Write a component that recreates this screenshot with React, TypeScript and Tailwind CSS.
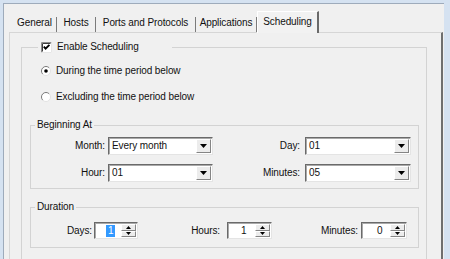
import React from "react";

function CheckBox() {
  return (
    <svg width="11" height="11" viewBox="0 0 11 11" className="shrink-0">
      <rect x="0" y="0" width="11" height="11" fill="#fff" />
      <path d="M0.5 10.5 V0.5 H10.5" fill="none" stroke="#8c8c8c" />
      <path d="M1.5 9.5 V1.5 H9.5" fill="none" stroke="#3c3c3c" />
      <path d="M0.5 10.5 H10.5 V0.5" fill="none" stroke="#e6e6e6" />
      <path d="M2.8 4.6 L4.6 6.6 L8.4 2.8" fill="none" stroke="#000" strokeWidth="1.9" />
    </svg>
  );
}

function Radio({ checked }: { checked?: boolean }) {
  return (
    <svg width="10" height="10" viewBox="0 0 10 10" className="shrink-0">
      <circle cx="5" cy="5" r="4.5" fill="#fff" />
      <path d="M1.8 8.2 A4.5 4.5 0 0 1 8.2 1.8" fill="none" stroke="#7a7a7a" />
      <path d="M8.2 1.8 A4.5 4.5 0 0 1 1.8 8.2" fill="none" stroke="#e2e2e2" />
      {checked && <circle cx="5" cy="5" r="1.8" fill="#000" />}
    </svg>
  );
}

function Combo({ value, className }: { value: string; className: string }) {
  return (
    <div
      className={`flex h-[18px] bg-white border border-t-[#6a6a6a] border-l-[#6a6a6a] border-r-[#e4e4e4] border-b-[#e4e4e4] shadow-[inset_1px_1px_0_#a9a9a9] ${className}`}
    >
      <div className="flex flex-1 items-center pl-[3px]">{value}</div>
      <div className="my-[1px] mr-[1px] flex w-[15px] items-center justify-center bg-[#ececec] border border-t-white border-l-white border-r-[#858585] border-b-[#858585]">
        <svg width="7" height="4" viewBox="0 0 7 4">
          <polygon points="0,0 7,0 3.5,4" fill="#000" />
        </svg>
      </div>
    </div>
  );
}

function Spin({
  value,
  selected,
  className,
  pad,
}: {
  value: string;
  selected?: boolean;
  className: string;
  pad: string;
}) {
  return (
    <div
      className={`flex h-[17px] bg-white border border-t-[#6a6a6a] border-l-[#6a6a6a] border-r-[#e4e4e4] border-b-[#e4e4e4] shadow-[inset_1px_1px_0_#a9a9a9] ${className}`}
    >
      <div className={`flex flex-1 items-center ${pad}`}>
        {selected ? (
          <span className="bg-[#3399ff] px-[2px] text-white">{value}</span>
        ) : (
          value
        )}
      </div>
      <div className="my-[1px] mr-[1px] flex w-[15px] flex-col">
        <div className="flex flex-1 items-center justify-center bg-[#ececec] border border-t-white border-l-white border-r-[#858585] border-b-[#858585]">
          <svg width="5" height="3" viewBox="0 0 5 3">
            <polygon points="2.5,0 5,3 0,3" fill="#000" />
          </svg>
        </div>
        <div className="flex flex-1 items-center justify-center bg-[#ececec] border border-t-white border-l-white border-r-[#858585] border-b-[#858585]">
          <svg width="5" height="3" viewBox="0 0 5 3">
            <polygon points="0,0 5,0 2.5,3" fill="#000" />
          </svg>
        </div>
      </div>
    </div>
  );
}

const tabs = [
  { name: "General", w: "w-[44px]" },
  { name: "Hosts", w: "w-[39px]" },
  { name: "Ports and Protocols", w: "w-[100px]" },
  { name: "Applications", w: "w-[61px]" },
];

export default function App() {
  return (
    <div className="h-[259px] w-[450px] overflow-hidden bg-[#d5e2f1] pl-[3px] pt-[3px] font-['Liberation_Sans',Arial,sans-serif] text-[10px] leading-[12px] tracking-[-0.1px] text-[#111]">
      <div className="flex h-[256px] w-[441px] flex-col border-l border-t border-[#9eabbb] bg-[#f0f0f0]">
        {/* tab strip */}
        <div className="flex h-[28px] shrink-0 items-end pl-[9px]">
          {tabs.map((t) => (
            <div
              key={t.name}
              className={`h-[15px] ${t.w} border-r border-r-[#7b7b7b] text-center`}
            >
              {t.name}
            </div>
          ))}
          <div className="relative z-10 -mb-px h-[22px] w-[62px] border-l border-t border-white border-r-2 border-r-[#6a6a6a] bg-[#f2f2f2] pt-[4px] text-center">
            Scheduling
          </div>
        </div>

        {/* tab page */}
        <div className="ml-[5px] w-[434px] flex-1 border-l border-t border-[#d6d6d6] border-r-2 border-r-[#6f6f6f] pl-[11px] pt-[8px]">
          <fieldset className="w-[406px] border border-[#d3d3d3] pb-[20px]">
            <legend className="ml-[16px] flex h-[12px] w-[134px] items-center gap-[5px] px-[3px]">
              <CheckBox />
              <span>Enable Scheduling</span>
            </legend>

            <div className="mt-[12px] flex h-[12px] items-center gap-[5px] pl-[19px]">
              <Radio checked />
              <span>During the time period below</span>
            </div>
            <div className="mt-[14px] flex h-[12px] items-center gap-[5px] pl-[19px]">
              <Radio />
              <span>Excluding the time period below</span>
            </div>

            <fieldset className="ml-[8px] mt-[16px] w-[389px] border border-[#d3d3d3] pb-[6px]">
              <legend className="ml-[4px] h-[12px] px-[2px]">Beginning At</legend>
              <div className="mt-[6px] flex h-[18px] items-center">
                <div className="w-[74px] text-right">Month:</div>
                <Combo value="Every month" className="ml-[3px] w-[105px]" />
                <div className="w-[87px] text-right">Day:</div>
                <Combo value="01" className="ml-[5px] w-[106px]" />
              </div>
              <div className="mt-[9px] flex h-[18px] items-center">
                <div className="w-[74px] text-right">Hour:</div>
                <Combo value="01" className="ml-[3px] w-[105px]" />
                <div className="w-[87px] text-right">Minutes:</div>
                <Combo value="05" className="ml-[5px] w-[106px]" />
              </div>
            </fieldset>

            <fieldset className="ml-[8px] mt-[12px] w-[389px] border border-[#d3d3d3] pb-[8px]">
              <legend className="ml-[4px] h-[12px] px-[2px]">Duration</legend>
              <div className="mt-[9px] flex h-[17px] items-center">
                <div className="w-[61px] text-right">Days:</div>
                <Spin value="1" selected className="ml-[2px] w-[44px]" pad="pl-[11px]" />
                <div className="w-[82px] text-right">Hours:</div>
                <Spin value="1" className="ml-[7px] w-[45px]" pad="pl-[13px]" />
                <div className="w-[86px] text-right">Minutes:</div>
                <Spin value="0" className="ml-[3px] w-[46px]" pad="pl-[15px]" />
              </div>
            </fieldset>
          </fieldset>
        </div>
      </div>
    </div>
  );
}
